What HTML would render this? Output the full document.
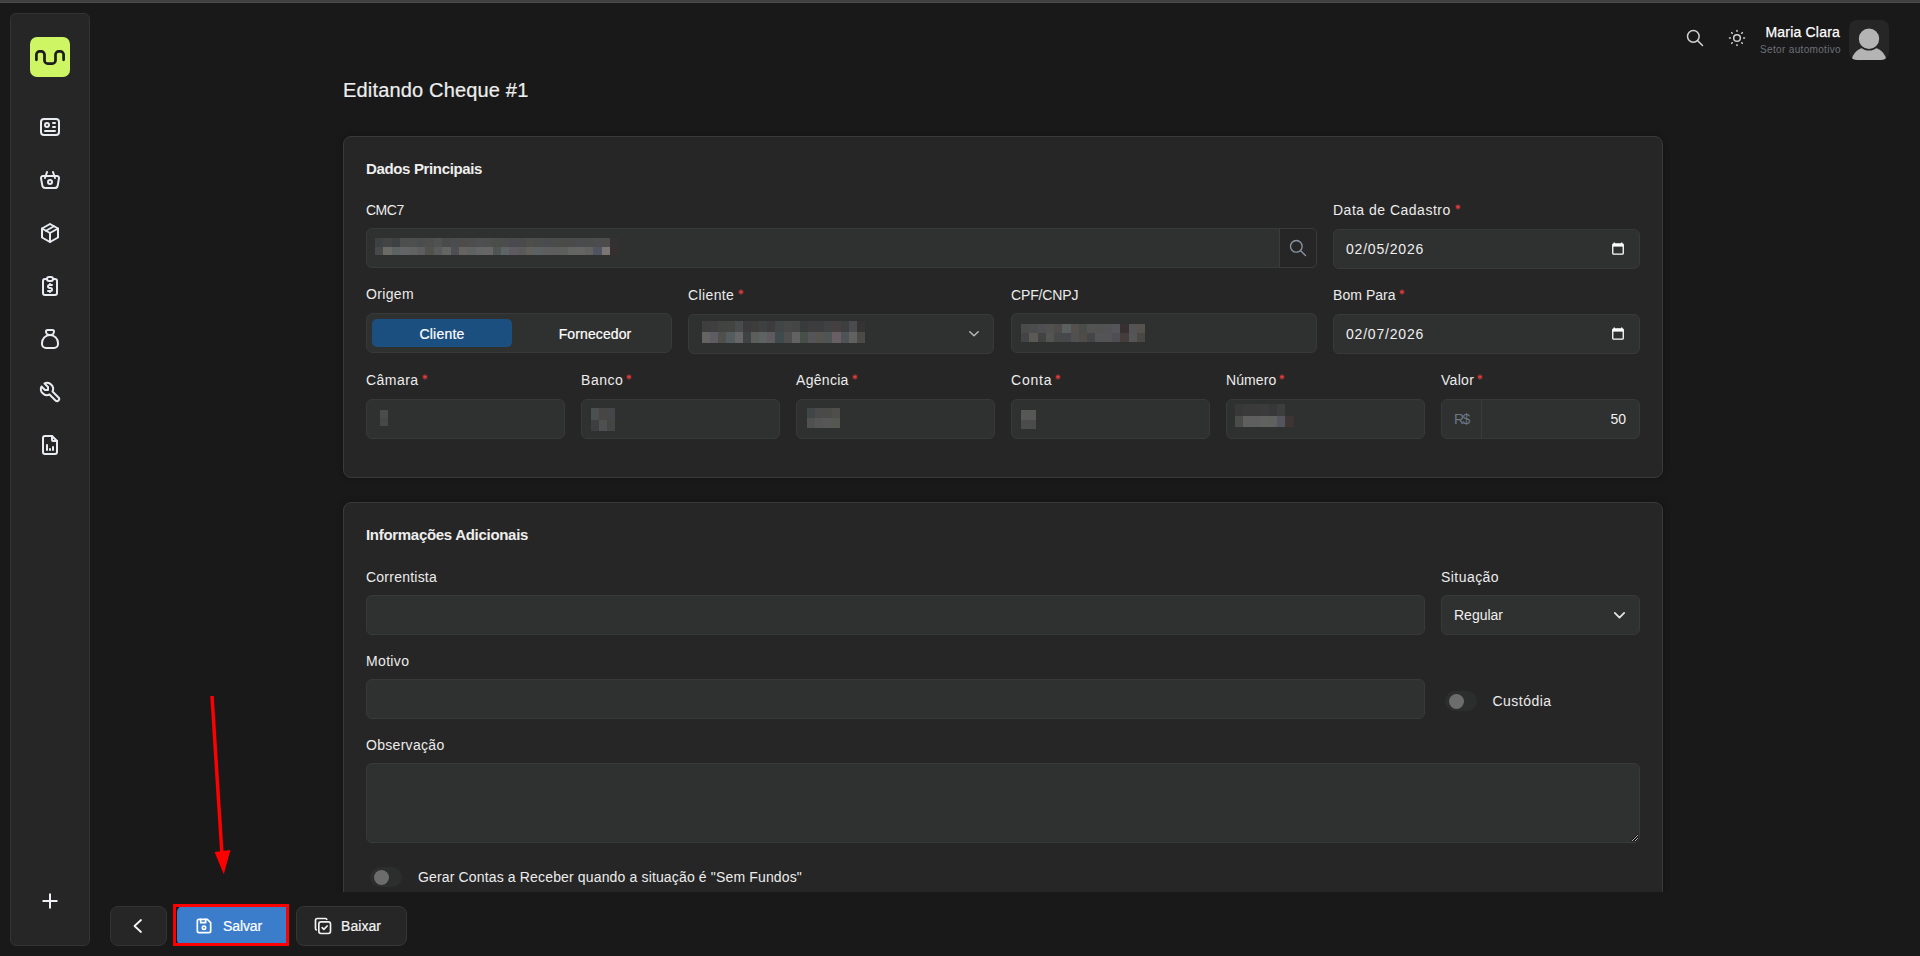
<!DOCTYPE html>
<html><head><meta charset="utf-8"><title>Editando Cheque</title>
<style>
html,body{margin:0;padding:0;width:1920px;height:956px;overflow:hidden;background:#191919;font-family:"Liberation Sans", sans-serif;}
.t{position:absolute;white-space:nowrap;font-family:"Liberation Sans", sans-serif;}
.b{position:absolute;box-sizing:content-box;}
svg.b{overflow:visible;}
</style></head><body>
<div class="b" style="left:0px;top:0px;width:1920px;height:2px;background:#404040;"></div>
<div class="b" style="left:0px;top:2px;width:1920px;height:1px;background:#4a4c4c;"></div>
<div class="b" style="left:10px;top:13px;width:78px;height:931px;background:#262626;border:1px solid #333333;border-radius:6px;"></div>
<svg class="b" style="left:30px;top:37px" width="40" height="40" viewBox="0 0 40 40"><rect x="0" y="0" width="40" height="40" rx="7" fill="#cdf564"/><path d="M6.4 22.8V17.6a3.2 3.2 0 0 1 3.2 -3.2h1.7a3.2 3.2 0 0 1 3.2 3.2V23.4a3.2 3.2 0 0 0 3.2 3.2h4.6a3.2 3.2 0 0 0 3.2 -3.2V17.6a3.2 3.2 0 0 1 3.2 -3.2h1.7a3.2 3.2 0 0 1 3.2 3.2V22.8" fill="none" stroke="#1c1c1c" stroke-width="2.7" stroke-linecap="round" stroke-linejoin="round"/></svg>
<svg class="b" style="left:38px;top:115px;" width="24" height="24" viewBox="0 0 24 24" fill="none" stroke="#e8ebf0" stroke-width="2" stroke-linecap="round" stroke-linejoin="round"><path d="M3 7a3 3 0 0 1 3 -3h12a3 3 0 0 1 3 3v10a3 3 0 0 1 -3 3h-12a3 3 0 0 1 -3 -3z"/><path d="M7 10a2 2 0 1 0 4 0a2 2 0 1 0 -4 0"/><path d="M15 8l2 0"/><path d="M15 12l2 0"/><path d="M7 16l10 0"/></svg>
<svg class="b" style="left:38px;top:168px;" width="24" height="24" viewBox="0 0 24 24" fill="none" stroke="#e8ebf0" stroke-width="2" stroke-linecap="round" stroke-linejoin="round"><path d="M10 14a2 2 0 1 0 4 0a2 2 0 0 0 -4 0"/><path d="M5.001 8h13.999a2 2 0 0 1 1.977 2.304l-1.255 7.152a3 3 0 0 1 -2.966 2.544h-9.512a3 3 0 0 1 -2.965 -2.544l-1.255 -7.152a2 2 0 0 1 1.977 -2.304z"/><path d="M17 10l-2 -6"/><path d="M7 10l2 -6"/></svg>
<svg class="b" style="left:38px;top:221px;" width="24" height="24" viewBox="0 0 24 24" fill="none" stroke="#e8ebf0" stroke-width="2" stroke-linecap="round" stroke-linejoin="round"><path d="M12 3l8 4.5l0 9l-8 4.5l-8 -4.5l0 -9l8 -4.5"/><path d="M12 12l8 -4.5"/><path d="M12 12l0 9"/><path d="M12 12l-8 -4.5"/><path d="M16 5.25l-8 4.5"/></svg>
<svg class="b" style="left:38px;top:274px;" width="24" height="24" viewBox="0 0 24 24" fill="none" stroke="#e8ebf0" stroke-width="2" stroke-linecap="round" stroke-linejoin="round"><path d="M9 5h-2a2 2 0 0 0 -2 2v12a2 2 0 0 0 2 2h10a2 2 0 0 0 2 -2v-12a2 2 0 0 0 -2 -2h-2"/><path d="M9 5a2 2 0 0 1 2 -2h2a2 2 0 0 1 2 2a2 2 0 0 1 -2 2h-2a2 2 0 0 1 -2 -2z"/><path d="M14 11h-2.5a1.5 1.5 0 0 0 0 3h1a1.5 1.5 0 0 1 0 3h-2.5"/><path d="M12 17v1m0 -8v1"/></svg>
<svg class="b" style="left:38px;top:327px;" width="24" height="24" viewBox="0 0 24 24" fill="none" stroke="#e8ebf0" stroke-width="2" stroke-linecap="round" stroke-linejoin="round"><path d="M9.5 3h5a1.5 1.5 0 0 1 1.5 1.5a3.5 3.5 0 0 1 -3.5 3.5h-1a3.5 3.5 0 0 1 -3.5 -3.5a1.5 1.5 0 0 1 1.5 -1.5z"/><path d="M4 17v-1a8 8 0 1 1 16 0v1a4 4 0 0 1 -4 4h-8a4 4 0 0 1 -4 -4z"/></svg>
<svg class="b" style="left:38px;top:380px;" width="24" height="24" viewBox="0 0 24 24" fill="none" stroke="#e8ebf0" stroke-width="2" stroke-linecap="round" stroke-linejoin="round"><path d="M7 10h3v-3l-3.5 -3.5a6 6 0 0 1 8 8l6 6a2 2 0 0 1 -3 3l-6 -6a6 6 0 0 1 -8 -8l3.5 3.5"/></svg>
<svg class="b" style="left:38px;top:433px;" width="24" height="24" viewBox="0 0 24 24" fill="none" stroke="#e8ebf0" stroke-width="2" stroke-linecap="round" stroke-linejoin="round"><path d="M14 3v4a1 1 0 0 0 1 1h4"/><path d="M17 21h-10a2 2 0 0 1 -2 -2v-14a2 2 0 0 1 2 -2h7l5 5v11a2 2 0 0 1 -2 2z"/><path d="M9 17l0 -5"/><path d="M12 17l0 -1"/><path d="M15 17l0 -3"/></svg>
<svg class="b" style="left:42px;top:893px" width="16" height="16" viewBox="0 0 16 16"><path d="M8 0.5V15.5M0.5 8H15.5" stroke="#eef0f4" stroke-width="2"/></svg>
<svg class="b" style="left:1685px;top:28px;" width="20" height="20" viewBox="0 0 24 24" fill="none" stroke="#d2d2d2" stroke-width="1.8" stroke-linecap="round" stroke-linejoin="round"><path d="M3 10a7 7 0 1 0 14 0a7 7 0 1 0 -14 0"/><path d="M21 21l-6 -6"/></svg>
<svg class="b" style="left:1727px;top:28px;" width="20" height="20" viewBox="0 0 24 24" fill="none" stroke="#d2d2d2" stroke-width="1.8" stroke-linecap="round" stroke-linejoin="round"><path d="M8 12a4 4 0 1 0 8 0a4 4 0 1 0 -8 0"/><path d="M3 12h1m8 -9v1m8 8h1m-9 8v1m-6.4 -15.4l.7 .7m12.1 -.7l-.7 .7m0 11.4l.7 .7m-12.1 -.7l-.7 .7"/></svg>
<div class="t" style="top:25px;font-size:14px;line-height:14px;color:#ffffff;font-weight:400;letter-spacing:0.2px;-webkit-text-stroke:0.25px #ffffff;right:80px;">Maria Clara</div>
<div class="t" style="top:45px;font-size:10px;line-height:10px;color:#6c7078;font-weight:400;letter-spacing:0.33px;right:79px;">Setor automotivo</div>
<svg class="b" style="left:1849px;top:20px" width="40" height="40" viewBox="0 0 40 40"><defs><clipPath id="av"><rect x="0" y="0" width="40" height="40" rx="8"/></clipPath></defs><rect x="0" y="0" width="40" height="40" rx="8" fill="#262626"/><g clip-path="url(#av)"><ellipse cx="20" cy="42" rx="17.5" ry="15.5" fill="#b4b4b4"/><circle cx="20" cy="18.8" r="11" fill="#b4b4b4" stroke="#262626" stroke-width="1.6"/></g></svg>
<div class="t" style="top:80px;font-size:20px;line-height:20px;color:#eeeeee;font-weight:400;letter-spacing:0.17px;-webkit-text-stroke:0.2px #eeeeee;left:343px;">Editando Cheque #1</div>
<div class="b" style="left:0;top:0;width:1920px;height:892px;overflow:hidden;">
<div class="b" style="left:343px;top:136px;width:1318px;height:340px;background:#262626;border:1px solid #3a3a3a;border-radius:8px;box-shadow:0 0 6px rgba(0,0,0,0.25);"></div>
<div class="t" style="top:161px;font-size:15px;line-height:15px;color:#eeeeee;font-weight:700;letter-spacing:-0.35px;left:366px;">Dados Principais</div>
<div class="t" style="top:203px;font-size:14px;line-height:14px;color:#ececec;font-weight:400;letter-spacing:-0.5px;left:366px;">CMC7</div>
<div class="b" style="left:366px;top:228px;width:913px;height:38px;background:#2f3130;border:1px solid #383a39;border-radius:6px 0 0 6px;"></div>
<div class="b" style="left:375px;top:238px;width:243px;height:17px;"><div style="position:absolute;left:0px;top:0px;width:8px;height:9px;background:#3c4242"></div><div style="position:absolute;left:8px;top:0px;width:9px;height:9px;background:#454444"></div><div style="position:absolute;left:17px;top:0px;width:8px;height:9px;background:#3d4142"></div><div style="position:absolute;left:25px;top:0px;width:9px;height:9px;background:#4d4f4e"></div><div style="position:absolute;left:34px;top:0px;width:8px;height:9px;background:#4d4e4d"></div><div style="position:absolute;left:42px;top:0px;width:8px;height:9px;background:#4b4c4e"></div><div style="position:absolute;left:50px;top:0px;width:9px;height:9px;background:#4d4e4d"></div><div style="position:absolute;left:59px;top:0px;width:8px;height:9px;background:#505251"></div><div style="position:absolute;left:67px;top:0px;width:9px;height:9px;background:#4a4a4a"></div><div style="position:absolute;left:76px;top:0px;width:8px;height:9px;background:#4b4c4e"></div><div style="position:absolute;left:84px;top:0px;width:8px;height:9px;background:#4d4c4b"></div><div style="position:absolute;left:92px;top:0px;width:9px;height:9px;background:#4d4d4d"></div><div style="position:absolute;left:101px;top:0px;width:8px;height:9px;background:#4e4f50"></div><div style="position:absolute;left:109px;top:0px;width:9px;height:9px;background:#4d4e4e"></div><div style="position:absolute;left:118px;top:0px;width:8px;height:9px;background:#4b4d4b"></div><div style="position:absolute;left:126px;top:0px;width:8px;height:9px;background:#4d4c4c"></div><div style="position:absolute;left:134px;top:0px;width:9px;height:9px;background:#4a4950"></div><div style="position:absolute;left:143px;top:0px;width:8px;height:9px;background:#4a4a4a"></div><div style="position:absolute;left:151px;top:0px;width:8px;height:9px;background:#4e4d4b"></div><div style="position:absolute;left:159px;top:0px;width:9px;height:9px;background:#4b4d4b"></div><div style="position:absolute;left:168px;top:0px;width:8px;height:9px;background:#4a4b4e"></div><div style="position:absolute;left:176px;top:0px;width:9px;height:9px;background:#4a4c4a"></div><div style="position:absolute;left:185px;top:0px;width:8px;height:9px;background:#4a4a47"></div><div style="position:absolute;left:193px;top:0px;width:8px;height:9px;background:#4a4a4a"></div><div style="position:absolute;left:201px;top:0px;width:9px;height:9px;background:#4a4b4d"></div><div style="position:absolute;left:210px;top:0px;width:8px;height:9px;background:#4a4b4b"></div><div style="position:absolute;left:218px;top:0px;width:9px;height:9px;background:#4b4c4e"></div><div style="position:absolute;left:227px;top:0px;width:8px;height:9px;background:#4e4b4c"></div><div style="position:absolute;left:235px;top:0px;width:8px;height:9px;background:#333231"></div><div style="position:absolute;left:0px;top:9px;width:8px;height:8px;background:#474a4a"></div><div style="position:absolute;left:8px;top:9px;width:9px;height:8px;background:#6b6b66"></div><div style="position:absolute;left:17px;top:9px;width:8px;height:8px;background:#5b6462"></div><div style="position:absolute;left:25px;top:9px;width:9px;height:8px;background:#636466"></div><div style="position:absolute;left:34px;top:9px;width:8px;height:8px;background:#616362"></div><div style="position:absolute;left:42px;top:9px;width:8px;height:8px;background:#5d5d60"></div><div style="position:absolute;left:50px;top:9px;width:9px;height:8px;background:#52524c"></div><div style="position:absolute;left:59px;top:9px;width:8px;height:8px;background:#5a5a5a"></div><div style="position:absolute;left:67px;top:9px;width:9px;height:8px;background:#636563"></div><div style="position:absolute;left:76px;top:9px;width:8px;height:8px;background:#4f4e54"></div><div style="position:absolute;left:84px;top:9px;width:8px;height:8px;background:#676360"></div><div style="position:absolute;left:92px;top:9px;width:9px;height:8px;background:#5e6260"></div><div style="position:absolute;left:101px;top:9px;width:8px;height:8px;background:#646566"></div><div style="position:absolute;left:109px;top:9px;width:9px;height:8px;background:#666666"></div><div style="position:absolute;left:118px;top:9px;width:8px;height:8px;background:#4e5553"></div><div style="position:absolute;left:126px;top:9px;width:8px;height:8px;background:#5e6366"></div><div style="position:absolute;left:134px;top:9px;width:9px;height:8px;background:#5f5a62"></div><div style="position:absolute;left:143px;top:9px;width:8px;height:8px;background:#5a5a5a"></div><div style="position:absolute;left:151px;top:9px;width:8px;height:8px;background:#62605d"></div><div style="position:absolute;left:159px;top:9px;width:9px;height:8px;background:#5c6163"></div><div style="position:absolute;left:168px;top:9px;width:8px;height:8px;background:#5e5e5e"></div><div style="position:absolute;left:176px;top:9px;width:9px;height:8px;background:#5e5c5c"></div><div style="position:absolute;left:185px;top:9px;width:8px;height:8px;background:#5e5e5a"></div><div style="position:absolute;left:193px;top:9px;width:8px;height:8px;background:#636563"></div><div style="position:absolute;left:201px;top:9px;width:9px;height:8px;background:#656565"></div><div style="position:absolute;left:210px;top:9px;width:8px;height:8px;background:#636160"></div><div style="position:absolute;left:218px;top:9px;width:9px;height:8px;background:#515460"></div><div style="position:absolute;left:227px;top:9px;width:8px;height:8px;background:#7a7676"></div><div style="position:absolute;left:235px;top:9px;width:8px;height:8px;background:#35302f"></div></div>
<div class="b" style="left:1279px;top:228px;width:36px;height:38px;background:#262626;border:1px solid #3b3b3b;border-radius:0 5px 5px 0;"></div>
<svg class="b" style="left:1288px;top:238px;" width="20" height="20" viewBox="0 0 24 24" fill="none" stroke="#8996a2" stroke-width="1.6" stroke-linecap="round" stroke-linejoin="round"><path d="M3 10a7 7 0 1 0 14 0a7 7 0 1 0 -14 0"/><path d="M21 21l-6 -6"/></svg>
<div class="t" style="top:203px;font-size:14px;line-height:14px;color:#ececec;font-weight:400;letter-spacing:0.5px;left:1333px;">Data de Cadastro</div>
<svg class="b" style="left:1454.5px;top:204px" width="6" height="6" viewBox="-3 -3 6 6"><path d="M0 -2.6V2.6M-2.25 -1.3L2.25 1.3M-2.25 1.3L2.25 -1.3" stroke="#dc3a3c" stroke-width="1.15"/></svg>
<div class="b" style="left:1333px;top:229px;width:305px;height:38px;background:#2f3130;border:1px solid #383a39;border-radius:6px;"></div>
<div class="t" style="top:242px;font-size:14px;line-height:14px;color:#f0f0f0;font-weight:400;letter-spacing:0.8px;left:1346px;">02/05/2026</div>
<svg class="b" style="left:1612px;top:242px" width="12" height="13" viewBox="0 0 12 13"><path d="M2.3 0.6v2M9.7 0.6v2" stroke="#ffffff" stroke-width="1.3"/><rect x="0.75" y="2" width="10.5" height="10.2" rx="1" fill="none" stroke="#ffffff" stroke-width="1.3"/><rect x="0.75" y="2" width="10.5" height="2.6" fill="#ffffff"/></svg>
<div class="t" style="top:287px;font-size:14px;line-height:14px;color:#ececec;font-weight:400;letter-spacing:0.34px;left:366px;">Origem</div>
<div class="b" style="left:366px;top:313px;width:304px;height:38px;background:#2f3130;border:1px solid #383a39;border-radius:7px;"></div>
<div class="b" style="left:372px;top:319px;width:140px;height:28px;background:#1b4f80;border-radius:5px;"></div>
<div class="t" style="top:327px;font-size:14px;line-height:14px;color:#ffffff;font-weight:400;letter-spacing:0.2px;-webkit-text-stroke:0.2px #ffffff;left:242px;width:400px;text-align:center;">Cliente</div>
<div class="t" style="top:327px;font-size:14px;line-height:14px;color:#ffffff;font-weight:400;letter-spacing:0.1px;-webkit-text-stroke:0.2px #ffffff;left:395px;width:400px;text-align:center;">Fornecedor</div>
<div class="t" style="top:288px;font-size:14px;line-height:14px;color:#ececec;font-weight:400;letter-spacing:0.38px;left:688px;">Cliente</div>
<svg class="b" style="left:737.5px;top:289px" width="6" height="6" viewBox="-3 -3 6 6"><path d="M0 -2.6V2.6M-2.25 -1.3L2.25 1.3M-2.25 1.3L2.25 -1.3" stroke="#dc3a3c" stroke-width="1.15"/></svg>
<div class="b" style="left:688px;top:314px;width:304px;height:38px;background:#2f3130;border:1px solid #383a39;border-radius:6px;"></div>
<div class="b" style="left:702px;top:321px;width:163px;height:22px;"><div style="position:absolute;left:0px;top:0px;width:8px;height:11px;background:#3e3e3e"></div><div style="position:absolute;left:8px;top:0px;width:8px;height:11px;background:#3f3f3f"></div><div style="position:absolute;left:16px;top:0px;width:8px;height:11px;background:#424442"></div><div style="position:absolute;left:24px;top:0px;width:9px;height:11px;background:#424442"></div><div style="position:absolute;left:33px;top:0px;width:8px;height:11px;background:#4a4b4d"></div><div style="position:absolute;left:41px;top:0px;width:8px;height:11px;background:#3b3b3b"></div><div style="position:absolute;left:49px;top:0px;width:8px;height:11px;background:#3f3d3b"></div><div style="position:absolute;left:57px;top:0px;width:8px;height:11px;background:#3d4142"></div><div style="position:absolute;left:65px;top:0px;width:8px;height:11px;background:#3e3b3c"></div><div style="position:absolute;left:73px;top:0px;width:9px;height:11px;background:#424546"></div><div style="position:absolute;left:82px;top:0px;width:8px;height:11px;background:#464847"></div><div style="position:absolute;left:90px;top:0px;width:8px;height:11px;background:#454545"></div><div style="position:absolute;left:98px;top:0px;width:8px;height:11px;background:#373b3b"></div><div style="position:absolute;left:106px;top:0px;width:8px;height:11px;background:#3e3d3d"></div><div style="position:absolute;left:114px;top:0px;width:8px;height:11px;background:#3e3d3d"></div><div style="position:absolute;left:122px;top:0px;width:8px;height:11px;background:#404142"></div><div style="position:absolute;left:130px;top:0px;width:9px;height:11px;background:#463f41"></div><div style="position:absolute;left:139px;top:0px;width:8px;height:11px;background:#3d3f3e"></div><div style="position:absolute;left:147px;top:0px;width:8px;height:11px;background:#4a4b4e"></div><div style="position:absolute;left:155px;top:0px;width:8px;height:11px;background:#363333"></div><div style="position:absolute;left:0px;top:11px;width:8px;height:11px;background:#646462"></div><div style="position:absolute;left:8px;top:11px;width:8px;height:11px;background:#5e5c62"></div><div style="position:absolute;left:16px;top:11px;width:8px;height:11px;background:#4f504b"></div><div style="position:absolute;left:24px;top:11px;width:9px;height:11px;background:#535d5f"></div><div style="position:absolute;left:33px;top:11px;width:8px;height:11px;background:#666666"></div><div style="position:absolute;left:41px;top:11px;width:8px;height:11px;background:#3f4344"></div><div style="position:absolute;left:49px;top:11px;width:8px;height:11px;background:#5c5e5c"></div><div style="position:absolute;left:57px;top:11px;width:8px;height:11px;background:#5c6362"></div><div style="position:absolute;left:65px;top:11px;width:8px;height:11px;background:#5f5a5e"></div><div style="position:absolute;left:73px;top:11px;width:9px;height:11px;background:#3f4a4d"></div><div style="position:absolute;left:82px;top:11px;width:8px;height:11px;background:#4f4f4f"></div><div style="position:absolute;left:90px;top:11px;width:8px;height:11px;background:#626262"></div><div style="position:absolute;left:98px;top:11px;width:8px;height:11px;background:#465048"></div><div style="position:absolute;left:106px;top:11px;width:8px;height:11px;background:#545459"></div><div style="position:absolute;left:114px;top:11px;width:8px;height:11px;background:#56544e"></div><div style="position:absolute;left:122px;top:11px;width:8px;height:11px;background:#4f5454"></div><div style="position:absolute;left:130px;top:11px;width:9px;height:11px;background:#6a5e65"></div><div style="position:absolute;left:139px;top:11px;width:8px;height:11px;background:#4e5357"></div><div style="position:absolute;left:147px;top:11px;width:8px;height:11px;background:#616161"></div><div style="position:absolute;left:155px;top:11px;width:8px;height:11px;background:#4b4a46"></div></div>
<svg class="b" style="left:969px;top:331px" width="10" height="5.5" viewBox="0 0 10 5.5"><path d="M0.8 0.8L5.0 4.7L9.2 0.8" fill="none" stroke="#b9b9b9" stroke-width="1.5" stroke-linecap="round" stroke-linejoin="round"/></svg>
<div class="t" style="top:288px;font-size:14px;line-height:14px;color:#ececec;font-weight:400;letter-spacing:-0.14px;left:1011px;">CPF/CNPJ</div>
<div class="b" style="left:1011px;top:313px;width:304px;height:38px;background:#2f3130;border:1px solid #383a39;border-radius:6px;"></div>
<div class="b" style="left:1021px;top:324px;width:124px;height:18px;"><div style="position:absolute;left:0px;top:0px;width:8px;height:9px;background:#4a4a4a"></div><div style="position:absolute;left:8px;top:0px;width:9px;height:9px;background:#4a4d4b"></div><div style="position:absolute;left:17px;top:0px;width:8px;height:9px;background:#4e4f52"></div><div style="position:absolute;left:25px;top:0px;width:8px;height:9px;background:#525150"></div><div style="position:absolute;left:33px;top:0px;width:8px;height:9px;background:#4e4d4c"></div><div style="position:absolute;left:41px;top:0px;width:9px;height:9px;background:#5a6060"></div><div style="position:absolute;left:50px;top:0px;width:8px;height:9px;background:#54504e"></div><div style="position:absolute;left:58px;top:0px;width:8px;height:9px;background:#4a4c4a"></div><div style="position:absolute;left:66px;top:0px;width:8px;height:9px;background:#525452"></div><div style="position:absolute;left:74px;top:0px;width:9px;height:9px;background:#525252"></div><div style="position:absolute;left:83px;top:0px;width:8px;height:9px;background:#535355"></div><div style="position:absolute;left:91px;top:0px;width:8px;height:9px;background:#53555a"></div><div style="position:absolute;left:99px;top:0px;width:9px;height:9px;background:#372f30"></div><div style="position:absolute;left:108px;top:0px;width:8px;height:9px;background:#545457"></div><div style="position:absolute;left:116px;top:0px;width:8px;height:9px;background:#56534f"></div><div style="position:absolute;left:0px;top:9px;width:8px;height:9px;background:#434446"></div><div style="position:absolute;left:8px;top:9px;width:9px;height:9px;background:#5a5956"></div><div style="position:absolute;left:17px;top:9px;width:8px;height:9px;background:#424242"></div><div style="position:absolute;left:25px;top:9px;width:8px;height:9px;background:#535552"></div><div style="position:absolute;left:33px;top:9px;width:8px;height:9px;background:#474948"></div><div style="position:absolute;left:41px;top:9px;width:9px;height:9px;background:#46474a"></div><div style="position:absolute;left:50px;top:9px;width:8px;height:9px;background:#4f504f"></div><div style="position:absolute;left:58px;top:9px;width:8px;height:9px;background:#4f4c48"></div><div style="position:absolute;left:66px;top:9px;width:8px;height:9px;background:#444547"></div><div style="position:absolute;left:74px;top:9px;width:9px;height:9px;background:#545456"></div><div style="position:absolute;left:83px;top:9px;width:8px;height:9px;background:#545456"></div><div style="position:absolute;left:91px;top:9px;width:8px;height:9px;background:#4e4e54"></div><div style="position:absolute;left:99px;top:9px;width:9px;height:9px;background:#453c3c"></div><div style="position:absolute;left:108px;top:9px;width:8px;height:9px;background:#545557"></div><div style="position:absolute;left:116px;top:9px;width:8px;height:9px;background:#4a4845"></div></div>
<div class="t" style="top:288px;font-size:14px;line-height:14px;color:#ececec;font-weight:400;letter-spacing:0.05px;left:1333px;">Bom Para</div>
<svg class="b" style="left:1399px;top:289px" width="6" height="6" viewBox="-3 -3 6 6"><path d="M0 -2.6V2.6M-2.25 -1.3L2.25 1.3M-2.25 1.3L2.25 -1.3" stroke="#dc3a3c" stroke-width="1.15"/></svg>
<div class="b" style="left:1333px;top:314px;width:305px;height:38px;background:#2f3130;border:1px solid #383a39;border-radius:6px;"></div>
<div class="t" style="top:327px;font-size:14px;line-height:14px;color:#f0f0f0;font-weight:400;letter-spacing:0.8px;left:1346px;">02/07/2026</div>
<svg class="b" style="left:1612px;top:327px" width="12" height="13" viewBox="0 0 12 13"><path d="M2.3 0.6v2M9.7 0.6v2" stroke="#ffffff" stroke-width="1.3"/><rect x="0.75" y="2" width="10.5" height="10.2" rx="1" fill="none" stroke="#ffffff" stroke-width="1.3"/><rect x="0.75" y="2" width="10.5" height="2.6" fill="#ffffff"/></svg>
<div class="t" style="top:373px;font-size:14px;line-height:14px;color:#ececec;font-weight:400;letter-spacing:0.46px;left:366px;">Câmara</div>
<svg class="b" style="left:422px;top:374px" width="6" height="6" viewBox="-3 -3 6 6"><path d="M0 -2.6V2.6M-2.25 -1.3L2.25 1.3M-2.25 1.3L2.25 -1.3" stroke="#dc3a3c" stroke-width="1.15"/></svg>
<div class="b" style="left:366px;top:399px;width:197px;height:38px;background:#2f3130;border:1px solid #383a39;border-radius:6px;"></div>
<div class="t" style="top:373px;font-size:14px;line-height:14px;color:#ececec;font-weight:400;letter-spacing:0.55px;left:581px;">Banco</div>
<svg class="b" style="left:625.6px;top:374px" width="6" height="6" viewBox="-3 -3 6 6"><path d="M0 -2.6V2.6M-2.25 -1.3L2.25 1.3M-2.25 1.3L2.25 -1.3" stroke="#dc3a3c" stroke-width="1.15"/></svg>
<div class="b" style="left:581px;top:399px;width:197px;height:38px;background:#2f3130;border:1px solid #383a39;border-radius:6px;"></div>
<div class="t" style="top:373px;font-size:14px;line-height:14px;color:#ececec;font-weight:400;letter-spacing:0.3px;left:796px;">Agência</div>
<svg class="b" style="left:852.4px;top:374px" width="6" height="6" viewBox="-3 -3 6 6"><path d="M0 -2.6V2.6M-2.25 -1.3L2.25 1.3M-2.25 1.3L2.25 -1.3" stroke="#dc3a3c" stroke-width="1.15"/></svg>
<div class="b" style="left:796px;top:399px;width:197px;height:38px;background:#2f3130;border:1px solid #383a39;border-radius:6px;"></div>
<div class="t" style="top:373px;font-size:14px;line-height:14px;color:#ececec;font-weight:400;letter-spacing:0.8px;left:1011px;">Conta</div>
<svg class="b" style="left:1054.6px;top:374px" width="6" height="6" viewBox="-3 -3 6 6"><path d="M0 -2.6V2.6M-2.25 -1.3L2.25 1.3M-2.25 1.3L2.25 -1.3" stroke="#dc3a3c" stroke-width="1.15"/></svg>
<div class="b" style="left:1011px;top:399px;width:197px;height:38px;background:#2f3130;border:1px solid #383a39;border-radius:6px;"></div>
<div class="t" style="top:373px;font-size:14px;line-height:14px;color:#ececec;font-weight:400;letter-spacing:0.1px;left:1226px;">Número</div>
<svg class="b" style="left:1279.3px;top:374px" width="6" height="6" viewBox="-3 -3 6 6"><path d="M0 -2.6V2.6M-2.25 -1.3L2.25 1.3M-2.25 1.3L2.25 -1.3" stroke="#dc3a3c" stroke-width="1.15"/></svg>
<div class="b" style="left:1226px;top:399px;width:197px;height:38px;background:#2f3130;border:1px solid #383a39;border-radius:6px;"></div>
<div class="t" style="top:373px;font-size:14px;line-height:14px;color:#ececec;font-weight:400;letter-spacing:0.3px;left:1441px;">Valor</div>
<svg class="b" style="left:1477px;top:374px" width="6" height="6" viewBox="-3 -3 6 6"><path d="M0 -2.6V2.6M-2.25 -1.3L2.25 1.3M-2.25 1.3L2.25 -1.3" stroke="#dc3a3c" stroke-width="1.15"/></svg>
<div class="b" style="left:1441px;top:399px;width:197px;height:38px;background:#2f3130;border:1px solid #383a39;border-radius:6px;"></div>
<div class="b" style="left:380px;top:410px;width:8px;height:16px;"><div style="position:absolute;left:0px;top:0px;width:8px;height:8px;background:#4b4b4b"></div><div style="position:absolute;left:0px;top:8px;width:8px;height:8px;background:#474747"></div></div>
<div class="b" style="left:591px;top:408px;width:24px;height:23px;"><div style="position:absolute;left:0px;top:0px;width:8px;height:12px;background:#4a4f4f"></div><div style="position:absolute;left:8px;top:0px;width:8px;height:12px;background:#474644"></div><div style="position:absolute;left:16px;top:0px;width:8px;height:12px;background:#434748"></div><div style="position:absolute;left:0px;top:12px;width:8px;height:11px;background:#3e3f41"></div><div style="position:absolute;left:8px;top:12px;width:8px;height:11px;background:#4e504f"></div><div style="position:absolute;left:16px;top:12px;width:8px;height:11px;background:#444542"></div></div>
<div class="b" style="left:807px;top:408px;width:33px;height:20px;"><div style="position:absolute;left:0px;top:0px;width:8px;height:10px;background:#404546"></div><div style="position:absolute;left:8px;top:0px;width:8px;height:10px;background:#4a4a4a"></div><div style="position:absolute;left:16px;top:0px;width:9px;height:10px;background:#4a4a48"></div><div style="position:absolute;left:25px;top:0px;width:8px;height:10px;background:#4f4e4c"></div><div style="position:absolute;left:0px;top:10px;width:8px;height:10px;background:#4f504f"></div><div style="position:absolute;left:8px;top:10px;width:8px;height:10px;background:#555555"></div><div style="position:absolute;left:16px;top:10px;width:9px;height:10px;background:#575757"></div><div style="position:absolute;left:25px;top:10px;width:8px;height:10px;background:#555751"></div></div>
<div class="b" style="left:1021px;top:410px;width:15px;height:19px;"><div style="position:absolute;left:0px;top:0px;width:8px;height:10px;background:#575755"></div><div style="position:absolute;left:8px;top:0px;width:7px;height:10px;background:#575755"></div><div style="position:absolute;left:0px;top:10px;width:8px;height:9px;background:#4b4b4b"></div><div style="position:absolute;left:8px;top:10px;width:7px;height:9px;background:#4b4b4b"></div></div>
<div class="b" style="left:1235px;top:404px;width:59px;height:23px;"><div style="position:absolute;left:0px;top:0px;width:8px;height:12px;background:#373837"></div><div style="position:absolute;left:8px;top:0px;width:9px;height:12px;background:#393a39"></div><div style="position:absolute;left:17px;top:0px;width:8px;height:12px;background:#393a39"></div><div style="position:absolute;left:25px;top:0px;width:9px;height:12px;background:#3a3b3a"></div><div style="position:absolute;left:34px;top:0px;width:8px;height:12px;background:#37373a"></div><div style="position:absolute;left:42px;top:0px;width:8px;height:12px;background:#3c3e3d"></div><div style="position:absolute;left:0px;top:12px;width:8px;height:11px;background:#4a4c4a"></div><div style="position:absolute;left:8px;top:12px;width:9px;height:11px;background:#5f5f5f"></div><div style="position:absolute;left:17px;top:12px;width:8px;height:11px;background:#5f5f5f"></div><div style="position:absolute;left:25px;top:12px;width:9px;height:11px;background:#606260"></div><div style="position:absolute;left:34px;top:12px;width:8px;height:11px;background:#5f6060"></div><div style="position:absolute;left:42px;top:12px;width:8px;height:11px;background:#54545e"></div><div style="position:absolute;left:50px;top:12px;width:9px;height:11px;background:#3e3434"></div></div>
<div class="b" style="left:1481px;top:400px;width:1px;height:38px;background:#3a3c3b;"></div>
<div class="t" style="top:412px;font-size:14px;line-height:14px;color:#6b7784;font-weight:400;letter-spacing:-1.5px;left:1454px;">R$</div>
<div class="t" style="top:412px;font-size:14px;line-height:14px;color:#f0f0f0;font-weight:400;right:294px;">50</div>
<div class="b" style="left:343px;top:502px;width:1318px;height:440px;background:#262626;border:1px solid #3a3a3a;border-radius:8px;box-shadow:0 0 6px rgba(0,0,0,0.25);"></div>
<div class="t" style="top:527px;font-size:15px;line-height:15px;color:#eeeeee;font-weight:700;letter-spacing:-0.3px;left:366px;">Informações Adicionais</div>
<div class="t" style="top:570px;font-size:14px;line-height:14px;color:#ececec;font-weight:400;letter-spacing:0.23px;left:366px;">Correntista</div>
<div class="b" style="left:366px;top:595px;width:1057px;height:38px;background:#2f3130;border:1px solid #383a39;border-radius:6px;"></div>
<div class="t" style="top:570px;font-size:14px;line-height:14px;color:#ececec;font-weight:400;letter-spacing:0.45px;left:1441px;">Situação</div>
<div class="b" style="left:1441px;top:595px;width:197px;height:38px;background:#2f3130;border:1px solid #383a39;border-radius:6px;"></div>
<div class="t" style="top:608px;font-size:14px;line-height:14px;color:#eeeeee;font-weight:400;left:1454px;">Regular</div>
<svg class="b" style="left:1613.5px;top:612px" width="11" height="6.5" viewBox="0 0 11 6.5"><path d="M0.8 0.8L5.5 5.7L10.2 0.8" fill="none" stroke="#e6e6e6" stroke-width="1.7" stroke-linecap="round" stroke-linejoin="round"/></svg>
<div class="t" style="top:654px;font-size:14px;line-height:14px;color:#ececec;font-weight:400;letter-spacing:0.34px;left:366px;">Motivo</div>
<div class="b" style="left:366px;top:679px;width:1057px;height:38px;background:#2f3130;border:1px solid #383a39;border-radius:6px;"></div>
<div class="b" style="left:1445px;top:691px;width:32px;height:20px;background:#2c2e2d;border-radius:10px;"></div>
<div class="b" style="left:1448.5px;top:693.5px;width:15px;height:15px;border-radius:50%;background:#6c6c6c"></div>
<div class="t" style="top:694px;font-size:14px;line-height:14px;color:#ececec;font-weight:400;letter-spacing:0.47px;left:1492.5px;">Custódia</div>
<div class="t" style="top:738px;font-size:14px;line-height:14px;color:#ececec;font-weight:400;letter-spacing:0.3px;left:366px;">Observação</div>
<div class="b" style="left:366px;top:763px;width:1272px;height:78px;background:#2f3130;border:1px solid #383a39;border-radius:6px;"></div>
<svg class="b" style="left:1629px;top:832px" width="10" height="10" viewBox="0 0 10 10"><path d="M9 3L3 9M9 6L6 9" stroke="#111" stroke-width="2.2"/><path d="M9 3L3 9M9 6L6 9" stroke="#b0b0b0" stroke-width="1"/></svg>
<div class="b" style="left:370px;top:867px;width:32px;height:20px;background:#2c2e2d;border-radius:10px;"></div>
<div class="b" style="left:373.5px;top:869.5px;width:15px;height:15px;border-radius:50%;background:#6c6c6c"></div>
<div class="t" style="top:870px;font-size:14px;line-height:14px;color:#ececec;font-weight:400;letter-spacing:0.15px;left:418px;">Gerar Contas a Receber quando a situação é "Sem Fundos"</div>
</div>
<div class="b" style="left:110px;top:906px;width:55px;height:38px;background:#262626;border:1px solid #333333;border-radius:8px;"></div>
<svg class="b" style="left:130px;top:916px" width="16" height="20" viewBox="0 0 16 20"><path d="M11 4L4.5 10L11 16" fill="none" stroke="#f4f4f4" stroke-width="1.8" stroke-linecap="round" stroke-linejoin="round"/></svg>
<div class="b" style="left:177px;top:906px;width:112px;height:40px;background:#3b7dca;border-radius:6px;"></div>
<svg class="b" style="left:194px;top:916px;" width="20" height="20" viewBox="0 0 24 24" fill="none" stroke="#ffffff" stroke-width="2" stroke-linecap="round" stroke-linejoin="round"><path d="M6 4h10l4 4v10a2 2 0 0 1 -2 2h-12a2 2 0 0 1 -2 -2v-12a2 2 0 0 1 2 -2"/><path d="M10 14a2 2 0 1 0 4 0a2 2 0 1 0 -4 0"/><path d="M14 4l0 4l-6 0l0 -4"/></svg>
<div class="t" style="top:919px;font-size:14px;line-height:14px;color:#ffffff;font-weight:400;letter-spacing:-0.1px;-webkit-text-stroke:0.2px #ffffff;left:223px;">Salvar</div>
<div class="b" style="left:296px;top:906px;width:109px;height:38px;background:#262626;border:1px solid #363636;border-radius:8px;"></div>
<svg class="b" style="left:313px;top:916px;" width="20" height="20" viewBox="0 0 24 24" fill="none" stroke="#f2f2f2" stroke-width="2" stroke-linecap="round" stroke-linejoin="round"><path d="M7 9.667a2.667 2.667 0 0 1 2.667 -2.667h8.666a2.667 2.667 0 0 1 2.667 2.667v8.666a2.667 2.667 0 0 1 -2.667 2.667h-8.666a2.667 2.667 0 0 1 -2.667 -2.667z"/><path d="M4.012 16.737a2 2 0 0 1 -1.012 -1.737v-10c0 -1.1 .9 -2 2 -2h10c.75 0 1.158 .385 1.5 1"/><path d="M11 14l2 2l4 -4"/></svg>
<div class="t" style="top:919px;font-size:14px;line-height:14px;color:#f2f2f2;font-weight:400;letter-spacing:0.07px;-webkit-text-stroke:0.2px #f2f2f2;left:341px;">Baixar</div>
<div class="b" style="left:173px;top:904px;width:110px;height:36px;border:3px solid #ff0000;"></div>
<svg class="b" style="left:0;top:0" width="1920" height="956" viewBox="0 0 1920 956"><path d="M212 696L221.8 852" stroke="#ff0000" stroke-width="3.5" stroke-linecap="butt"/><path d="M214.6 852L230.4 850L223.8 874.3Z" fill="#ff0000"/></svg>
</body></html>
